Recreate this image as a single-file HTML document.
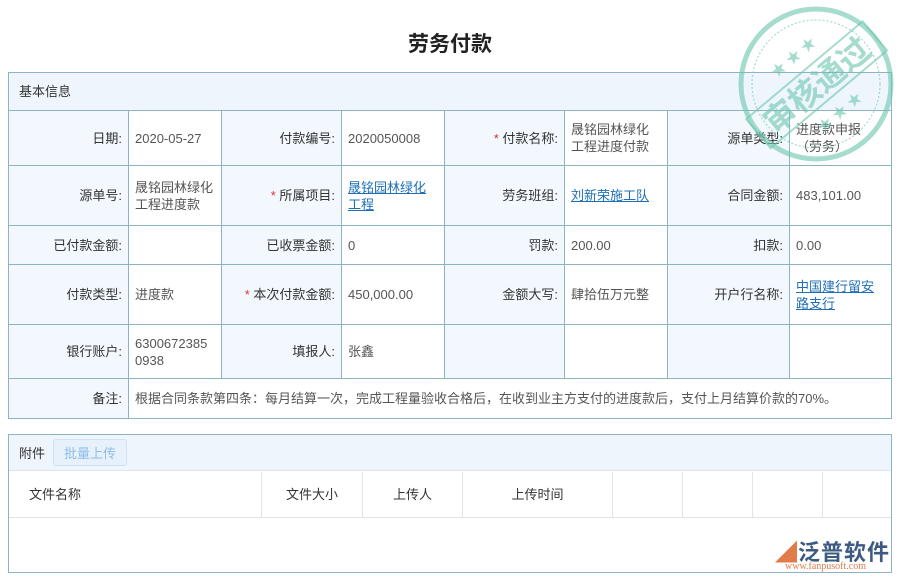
<!DOCTYPE html>
<html><head><meta charset="utf-8"><style>
body{margin:0;width:900px;height:586px;background:#fff;font-family:"Liberation Sans","Noto Sans CJK SC",sans-serif;font-size:13px;color:#333;position:relative;overflow:hidden}
*{box-sizing:border-box}
.t{position:absolute;top:28px;left:0;width:900px;text-align:center;font-size:21px;font-weight:bold;color:#222}
table{position:absolute;left:8px;top:72px;border-collapse:collapse;width:884px;table-layout:fixed}
td{border:1px solid #8fb3c6;padding:0 6px;line-height:17px;vertical-align:middle;color:#555}
td.l{background:#f2f8fd;text-align:right;color:#333}
td.h{background:#eef5fc;padding-left:10px;color:#333}
a{color:#1e6fb5;text-decoration:underline}
.r{color:#d33}
.att{position:absolute;left:8px;top:434px;width:884px;height:139px;border:1px solid #8fb3c6}
.ah{height:36px;background:#eef5fc;border-bottom:1px solid #dde4ea;display:flex;align-items:center;padding-left:10px}
.btn{margin-left:8px;border:1px solid #cfe2f3;background:#e6f1fb;color:#8fbde4;border-radius:3px;padding:3px 10px}
.col{position:absolute;top:37px;height:45px;border-right:1px solid #e3e3e3;line-height:45px;color:#333}
.hr{position:absolute;top:82px;left:0;width:882px;border-top:1px solid #e3e3e3}
</style></head><body>
<div class="t">劳务付款</div>
<table>
<colgroup><col style="width:120px"><col style="width:93px"><col style="width:120px"><col style="width:103px"><col style="width:120px"><col style="width:103px"><col style="width:122px"><col></colgroup>
<tr style="height:38px"><td class="h" colspan="8">基本信息</td></tr>
<tr style="height:55px"><td class="l">日期:</td><td>2020-05-27</td><td class="l">付款编号:</td><td>2020050008</td><td class="l"><span class="r">*</span> 付款名称:</td><td>晟铭园林绿化工程进度付款</td><td class="l">源单类型:</td><td>进度款申报（劳务）</td></tr>
<tr style="height:60px"><td class="l">源单号:</td><td>晟铭园林绿化工程进度款</td><td class="l"><span class="r">*</span> 所属项目:</td><td><a>晟铭园林绿化工程</a></td><td class="l">劳务班组:</td><td><a>刘新荣施工队</a></td><td class="l">合同金额:</td><td>483,101.00</td></tr>
<tr style="height:39px"><td class="l">已付款金额:</td><td></td><td class="l">已收票金额:</td><td>0</td><td class="l">罚款:</td><td>200.00</td><td class="l">扣款:</td><td>0.00</td></tr>
<tr style="height:60px"><td class="l">付款类型:</td><td>进度款</td><td class="l"><span class="r">*</span> 本次付款金额:</td><td>450,000.00</td><td class="l">金额大写:</td><td>肆拾伍万元整</td><td class="l">开户行名称:</td><td><a>中国建行留安路支行</a></td></tr>
<tr style="height:54px"><td class="l">银行账户:</td><td>6300672385<br>0938</td><td class="l">填报人:</td><td>张鑫</td><td class="l"></td><td></td><td class="l"></td><td></td></tr>
<tr style="height:40px"><td class="l">备注:</td><td colspan="7">根据合同条款第四条：每月结算一次，完成工程量验收合格后，在收到业主方支付的进度款后，支付上月结算价款的70%。</td></tr>
</table>
<div class="att"><div class="ah">附件<span class="btn">批量上传</span></div>
<div class="col" style="left:0;width:253px;padding-left:20px">文件名称</div>
<div class="col" style="left:253px;width:101px;text-align:center">文件大小</div>
<div class="col" style="left:354px;width:100px;text-align:center">上传人</div>
<div class="col" style="left:454px;width:150px;text-align:center">上传时间</div>
<div class="col" style="left:604px;width:70px"></div>
<div class="col" style="left:674px;width:70px"></div>
<div class="col" style="left:744px;width:70px"></div>
<div class="hr"></div>
<div style="position:absolute;left:766px;top:100px;font-size:22px;color:#3d5a80;font-weight:bold;letter-spacing:1px"><span style="color:#e07b4a">◢</span>泛普软件</div>
<div style="position:absolute;left:776px;top:126px;font-size:10px;color:#e07b4a;font-family:'Liberation Serif',serif">www.fanpusoft.com</div>
</div>
<svg style="position:absolute;left:736px;top:2px" width="160" height="165" viewBox="0 0 160 165">
<g fill="none" stroke="#6cc6ad" opacity="0.6">
<circle cx="80" cy="82" r="75" stroke-width="5"/>
<circle cx="80" cy="82" r="64" stroke-width="1.2" stroke-dasharray="2 2"/>
</g>
<g transform="rotate(-40 80 82)" opacity="0.6">
<rect x="4" y="64" width="152" height="38" fill="none" stroke="#6cc6ad" stroke-width="2"/>
<text x="80" y="95" text-anchor="middle" font-size="32" font-weight="bold" fill="#6cc6ad" font-family="'Noto Sans CJK SC',sans-serif">审核通过</text>
<text x="80" y="52" text-anchor="middle" font-size="15" fill="#6cc6ad">★ ★ ★</text>
<text x="80" y="124" text-anchor="middle" font-size="15" fill="#6cc6ad">★ ★ ★</text>
</g>
</svg>
</body></html>
